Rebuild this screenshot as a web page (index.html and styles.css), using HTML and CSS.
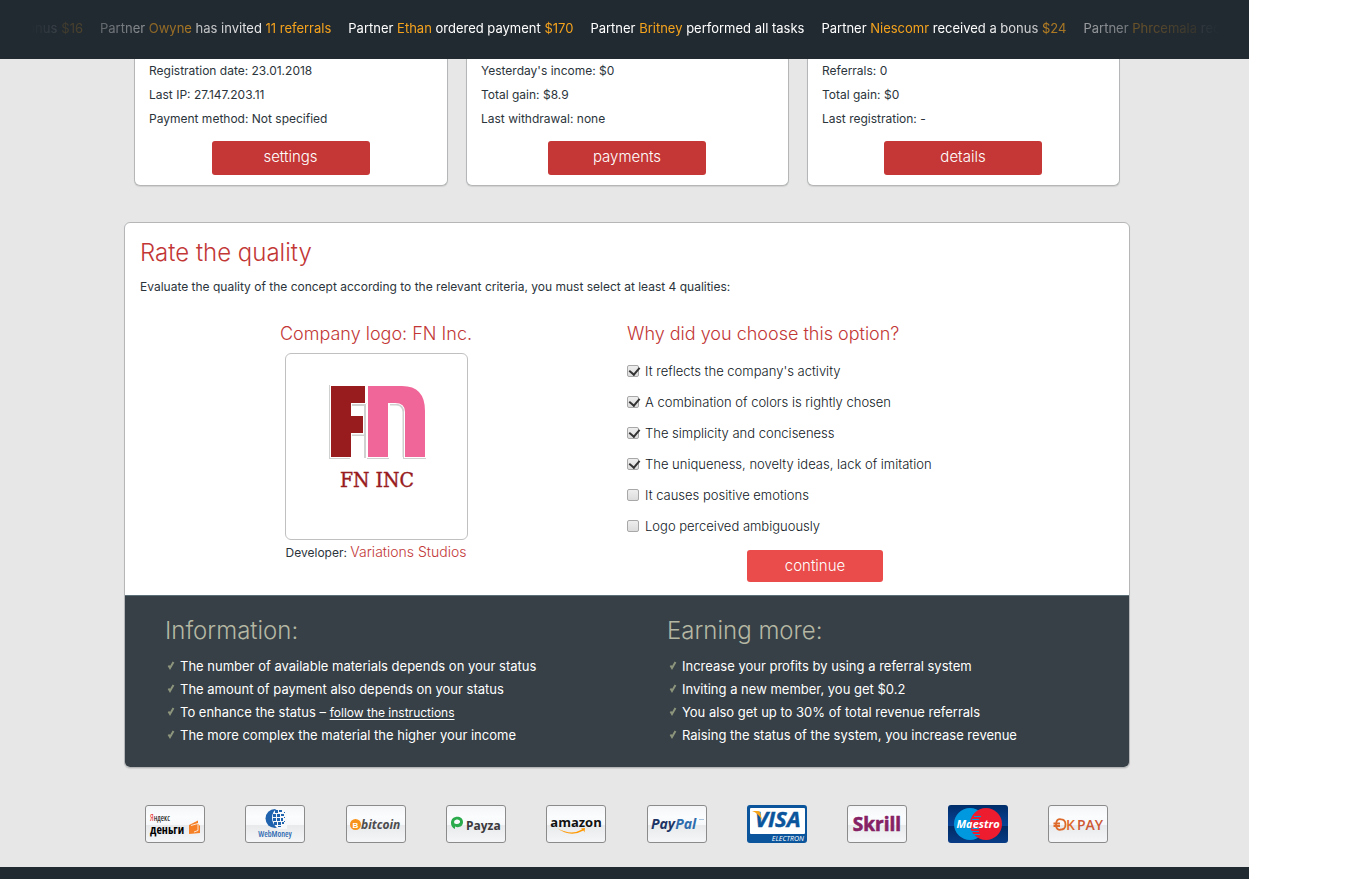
FILE: index.html
```html
<!DOCTYPE html>
<html lang="en">
<head>
<meta charset="utf-8">
<title>Partner account</title>
<link rel="stylesheet" href="styles.css">
</head>
<body>
<div class="page">
  <header class="topbar">
    <div class="ticker">
      <span class="news news-leaving">bonus <b>$16</b></span>
      <span class="news">Partner <b>Owyne</b> has invited <b>11 referrals</b></span>
      <span class="news">Partner <b>Ethan</b> ordered payment <b>$170</b></span>
      <span class="news">Partner <b>Britney</b> performed all tasks</span>
      <span class="news">Partner <b>Niescomr</b> received a bonus <b>$24</b></span>
      <span class="news">Partner <b>Phrcemala</b> received</span>
    </div>
  </header>

  <main class="content">
    <section class="cards">
      <article class="card">
        <p>Registration date: 23.01.2018</p>
        <p>Last IP: 27.147.203.11</p>
        <p>Payment method: Not specified</p>
        <button class="btn" type="button">settings</button>
      </article>
      <article class="card">
        <p>Yesterday's income: $0</p>
        <p>Total gain: $8.9</p>
        <p>Last withdrawal: none</p>
        <button class="btn" type="button">payments</button>
      </article>
      <article class="card">
        <p>Referrals: 0</p>
        <p>Total gain: $0</p>
        <p>Last registration: -</p>
        <button class="btn" type="button">details</button>
      </article>
    </section>

    <section class="panel">
      <div class="intro">
        <h1>Rate the quality</h1>
        <p>Evaluate the quality of the concept according to the relevant criteria, you must select at least 4 qualities:</p>
      </div>
      <div class="rating">
        <div class="concept">
          <h2>Company logo: FN Inc.</h2>
          <div class="logo-box">
            <svg class="logo" viewBox="0 0 100 108" role="img" aria-label="FN Inc">
              <g fill="#d0d0d0">
                <path d="M3 1H38V22H24V35H37V51H24V75H3Z"/>
                <path d="M26 20H41V75H63V20H72Q77 21 77 28V75H100V27L60 19Z"/>
              </g>
              <g fill="#fff">
                <path d="M4 1H40V21H26V31H38V50H26V74H4Z"/>
                <path d="M26 21H40V74H26V50H38V31H26Z"/>
                <path d="M41 1H74Q100 1 100 26V74H78V28Q78 21 68 21H63V74H41Z"/>
              </g>
              <path fill="#d0d0d0" d="M26 20H40V74H38V22H26ZM26 50.500H38V52H26Z"/>
              <path fill="#d0d0d0" d="M64 20H72Q78 21 78 28V73H76.500V28Q76 22 71 21.500H64Z"/>
              <path fill="#981b1e" d="M5 2H39V19H25V32H37V49H25V73H5Z"/>
              <path fill="#f06698" d="M42 2H76Q99 2 99 27V73H79V28Q79 19 69 19H62V73H42Z"/>
              <text x="51" y="103" class="logo-name">FN INC</text>
            </svg>
          </div>
          <p class="developer">Developer: <a href="#">Variations Studios</a></p>
        </div>
        <form class="reasons">
          <h2>Why did you choose this option?</h2>
          <label><input type="checkbox" checked>It reflects the company's activity</label>
          <label><input type="checkbox" checked>A combination of colors is rightly chosen</label>
          <label><input type="checkbox" checked>The simplicity and conciseness</label>
          <label><input type="checkbox" checked>The uniqueness, novelty ideas, lack of imitation</label>
          <label><input type="checkbox">It causes positive emotions</label>
          <label><input type="checkbox">Logo perceived ambiguously</label>
          <button class="btn btn-bright" type="button">continue</button>
        </form>
      </div>
      <div class="tips">
        <div class="tip">
          <h1>Information:</h1>
          <ul>
            <li><svg class="tick" viewBox="0 0 8 9"><path d="M1.500 4.500L3 7L6.500 1"/></svg>The number of available materials depends on your status</li>
            <li><svg class="tick" viewBox="0 0 8 9"><path d="M1.500 4.500L3 7L6.500 1"/></svg>The amount of payment also depends on your status</li>
            <li><svg class="tick" viewBox="0 0 8 9"><path d="M1.500 4.500L3 7L6.500 1"/></svg><span>To enhance the status – <a href="#">follow the instructions</a></span></li>
            <li><svg class="tick" viewBox="0 0 8 9"><path d="M1.500 4.500L3 7L6.500 1"/></svg>The more complex the material the higher your income</li>
          </ul>
        </div>
        <div class="tip">
          <h1>Earning more:</h1>
          <ul>
            <li><svg class="tick" viewBox="0 0 8 9"><path d="M1.500 4.500L3 7L6.500 1"/></svg>Increase your profits by using a referral system</li>
            <li><svg class="tick" viewBox="0 0 8 9"><path d="M1.500 4.500L3 7L6.500 1"/></svg>Inviting a new member, you get $0.2</li>
            <li><svg class="tick" viewBox="0 0 8 9"><path d="M1.500 4.500L3 7L6.500 1"/></svg>You also get up to 30% of total revenue referrals</li>
            <li><svg class="tick" viewBox="0 0 8 9"><path d="M1.500 4.500L3 7L6.500 1"/></svg>Raising the status of the system, you increase revenue</li>
          </ul>
        </div>
      </div>
    </section>

    <section class="systems">
      <svg class="pay" viewBox="0 0 60 38">
        <defs>
          <linearGradient id="plate" x2="0" y2="1">
            <stop offset="0" stop-color="#f4f5f6"/><stop offset=".3" stop-color="#fbfcfd"/><stop offset=".54" stop-color="#f7f8fa"/>
            <stop offset=".54" stop-color="#e8eaec"/><stop offset="1" stop-color="#f5f6f7"/>
          </linearGradient>
          <linearGradient id="navy" x2="0" y2="1">
            <stop offset="0" stop-color="#002d6a"/><stop offset=".54" stop-color="#084295"/><stop offset=".54" stop-color="#002a63"/><stop offset="1" stop-color="#083c86"/>
          </linearGradient>
        </defs>
        <rect class="plate" x=".5" y=".5" width="59" height="37" rx="2.5"/>
        <text x="5" y="16" class="cond" font-size="8"><tspan fill="#e8262b">Я</tspan>ндекс</text>
        <text x="5" y="29" class="cond" font-size="12" font-weight="700">деньги</text>
        <path fill="#f58025" d="M44 20L53 15.500V18.500L55 21V28L44 29Z"/>
        <path fill="none" stroke="#fff" stroke-width=".8" d="M46 20.500L53 18.500V25.500L49 27"/>
      </svg>
      <svg class="pay" viewBox="0 0 60 38">
        <rect class="plate" x=".5" y=".5" width="59" height="37" rx="2.5"/>
        <circle cx="30" cy="13.500" r="9.500" fill="#1f62ae"/>
        <path fill="#f6f8fa" d="M33 3H42V24H34Q27 20 27 13Q27 6 33 3Z"/>
        <g fill="#1f62ae">
          <path d="M30 5h3v3h-3zM34 5h3v2h-3zM28 9h3v3h-3zM32 9h3v3h-3zM36 9h3v2h-3zM28 13h3v3h-3zM32 13h3v3h-3zM36 13h2v3h-2zM29 17h3v3h-3zM33 17h3v3h-3zM37 17h2v2h-2zM33 21h3v1h-3zM39 7h1v1h-1zM39 12h1v1h-1zM39 16h1v1h-1z"/>
        </g>
        <text x="30" y="32" text-anchor="middle" class="cond" font-size="8" font-weight="600" fill="#2a67b0">WebMoney</text>
      </svg>
      <svg class="pay" viewBox="0 0 60 38">
        <rect class="plate" x=".5" y=".5" width="59" height="37" rx="2.5"/>
        <circle cx="9.500" cy="19.500" r="5.500" fill="#f7931a"/>
        <text x="9.500" y="22.500" text-anchor="middle" class="sans" font-size="8" font-weight="700" fill="#fff">B</text>
        <text x="15" y="24" class="open" font-size="12" font-weight="700" font-style="italic" fill="#4d4d4f">bitcoin</text>
      </svg>
      <svg class="pay" viewBox="0 0 60 38">
        <rect class="plate" x=".5" y=".5" width="59" height="37" rx="2.5"/>
        <path fill="#2bab4b" fill-rule="evenodd" d="M5 18C5 10 17 10 17 17C17 22 12 23 9 21.500L9 24Q5 22 5 18ZM8 17Q8 19.500 11 19Q14.500 18.500 14 16Q13 14 10.500 14.500Q8 15 8 17Z"/>
        <text x="20" y="25" class="open" font-size="12" font-weight="700" fill="#3c3a3c">Payza</text>
      </svg>
      <svg class="pay" viewBox="0 0 60 38">
        <rect class="plate" x=".5" y=".5" width="59" height="37" rx="2.5"/>
        <text x="30" y="22" text-anchor="middle" class="open" font-size="13" font-weight="700" fill="#111">amazon</text>
        <path fill="#f90" d="M11 23Q25 31 36 24.500L35 23.500L39 23L38.500 27.500L37.500 25.500Q24 33 11 23Z"/>
      </svg>
      <svg class="pay" viewBox="0 0 60 38">
        <rect class="plate" x=".5" y=".5" width="59" height="37" rx="2.5"/>
        <text x="4" y="24" class="open" font-size="14" font-weight="700" font-style="italic" fill="#1e3566">Pay<tspan fill="#2f6dad">Pal</tspan></text>
        <path stroke="#a9c3dd" d="M52 14.500h5"/>
      </svg>
      <svg class="pay" viewBox="0 0 60 38">
        <rect width="60" height="38" rx="3" fill="#0b559c"/>
        <rect x="3" y="3" width="55" height="26" rx="1" fill="#fff"/>
        <text x="8" y="22" class="open" font-size="22" font-weight="700" font-style="italic" fill="#0b559c" stroke="#0b559c" stroke-width=".5">VISA</text>
        <path fill="#f9a51a" d="M5 6H11Q13 6 13.500 9L15 15Q11 8 5 6Z"/>
        <text x="57" y="36" text-anchor="end" class="open" font-size="7" font-style="italic" fill="#fff">ELECTRON</text>
      </svg>
      <svg class="pay" viewBox="0 0 60 38">
        <rect class="plate" x=".5" y=".5" width="59" height="37" rx="2.5"/>
        <text x="30" y="26" text-anchor="middle" class="open" font-size="19" font-weight="700" fill="#862165" stroke="#862165" stroke-width=".6">Skrill</text>
      </svg>
      <svg class="pay" viewBox="0 0 60 38">
        <rect width="60" height="38" rx="3" fill="url(#navy)"/>
        <circle cx="22" cy="19" r="16" fill="#0099df"/>
        <circle cx="38" cy="19" r="16" fill="#ed1c2e"/>
        <path stroke="#0099df" d="M26 11.500h7M24 14.500h7M24 23.500h7M24 26.500h7M26 29.500h6"/>
        <text x="30" y="23" text-anchor="middle" class="open" font-size="11" font-weight="700" font-style="italic" fill="#fff">Maestro</text>
      </svg>
      <svg class="pay" viewBox="0 0 60 38">
        <rect class="plate" x=".5" y=".5" width="59" height="37" rx="2.5"/>
        <path fill="none" stroke="#dd6a2b" stroke-width="1.800" d="M14 14.500Q8 13 8 19.500T14 24.500M5.500 18.500H12M5.500 21H12M12 14.500Q17.500 14 17.500 19.500T12 24.500"/>
        <text x="18" y="25" class="open" font-size="14" font-weight="600" fill="#dd6a2b">K</text>
        <text x="29" y="25" class="open" font-size="14" font-weight="600" fill="#cd5a35">PAY</text>
      </svg>
    </section>
  </main>
  <footer class="footer"></footer>
</div>
</body>
</html>
```

FILE: styles.css
```css
* { box-sizing: border-box; }
body {
  margin: 0;
  padding: 0 117px 15px 0;
  background: #fff;
  color: #2b343b;
  font: 400 12px/24px Inter, "Liberation Sans", sans-serif;
}
h1, h2, p, ul { margin: 0; padding: 0; }
h1 { font-size: 24px; line-height: 32px; font-weight: 300; color: #c23736; }
h2 { font-size: 18px; line-height: 24px; font-weight: 300; color: #c23736; }
.page { background: #e7e7e7; }

.topbar { padding: 16px 30px 19px; background: #222a31; }
.ticker {
  display: flex;
  gap: 17px;
  overflow: hidden;
  color: #fff;
  font-size: 13px;
  -webkit-mask-image: linear-gradient(90deg, transparent, #000 250px, #000 calc(100% - 250px), transparent);
  mask-image: linear-gradient(90deg, transparent, #000 250px, #000 calc(100% - 250px), transparent);
}
.news { flex: none; white-space: nowrap; }
.news b { font-weight: 400; color: #f5a31d; }
.news-leaving { display: flex; justify-content: flex-end; gap: 4px; width: 53px; }

.content { padding: 0 119px 24px 124px; }
.cards {
  display: grid;
  grid-template-columns: 314fr 323fr 313fr;
  gap: 18px;
  padding: 0 10px;
}
.card {
  display: flex;
  flex-direction: column;
  padding: 0 15px 10px 14px;
  background: #fff;
  border: 1px solid #b4b6b7;
  border-top: 0;
  border-radius: 0 0 6px 6px;
  box-shadow: 0 1px 1px #d0d0d0;
}
.btn {
  align-self: center;
  width: 158px;
  height: 34px;
  margin-top: 10px;
  padding: 0 0 2px;
  border: 0;
  border-radius: 3px;
  background: #c43736;
  color: #fff;
  font: 300 15px/20px Inter, "Liberation Sans", sans-serif;
}

.panel {
  margin-top: 36px;
  background: #fff;
  border: 1px solid #b4b6b7;
  border-radius: 6px;
  box-shadow: 0 1px 1px #d0d0d0;
  overflow: hidden;
}
.intro { padding: 14px 15px 0; }
.intro p { margin-top: 6px; }
.rating { display: grid; grid-template-columns: 1fr 1fr; padding: 23px 0 13px; }
.concept { display: flex; flex-direction: column; align-items: center; }
.logo-box {
  display: flex;
  justify-content: center;
  width: 183px;
  height: 187px;
  margin-top: 7px;
  padding-top: 30px;
  border: 1px solid #c0c0c0;
  border-radius: 6px;
}
.logo { width: 100px; height: 108px; }
.logo-name {
  font-family: "DejaVu Serif Condensed", "DejaVu Serif", serif;
  font-size: 21px;
  font-stretch: condensed;
  fill: #981b1e;
  stroke: #981b1e;
  stroke-width: .4px;
  text-anchor: middle;
}
.developer a { color: #c23736; font-size: 14px; font-weight: 300; text-decoration: none; }
.reasons { display: flex; flex-direction: column; align-items: flex-start; }
.reasons h2 { margin-bottom: 10px; }
.reasons label {
  display: flex;
  align-items: center;
  gap: 6px;
  color: #10181e;
  font-size: 13px;
  line-height: 31px;
  font-weight: 300;
}
.reasons input {
  appearance: none;
  width: 12px;
  height: 12px;
  margin: 0 0 1px;
  border: 1px solid #a8a8a8;
  border-radius: 2px;
  background: linear-gradient(#eee, #dcdcdc);
}
.reasons input:checked::after {
  content: "";
  display: block;
  width: 5px;
  height: 8px;
  margin: 0 0 0 3px;
  border: solid #333;
  border-width: 0 2px 2px 0;
  transform: translateY(-1px) rotate(40deg);
}
.btn-bright {
  align-self: flex-start;
  width: 136px;
  height: 32px;
  margin: 8px 0 0 120px;
  padding: 0;
  background: #e94c4b;
}

.tips {
  display: grid;
  grid-template-columns: 1fr 1fr;
  padding: 19px 0 20px;
  background: #364046;
  border-top: 1px solid #5c6f78;
  color: #fff;
}
.tip { padding-left: 40px; }
.tip h1 { margin-bottom: 8px; color: #b5b7a3; }
.tip ul { list-style: none; }
.tip li { display: flex; align-items: center; padding-left: 2px; font-size: 13px; line-height: 23px; }
.tip a { color: #fff; font-size: 12px; text-underline-offset: 2px; }
.tick { width: 8px; height: 9px; margin: 0 5px 2px 0; fill: none; stroke: #8d947c; stroke-width: 2; }

.systems { display: flex; justify-content: space-between; padding: 37px 22px 0 21px; }
.pay { width: 60px; height: 38px; }
.plate { fill: url(#plate); stroke: #8b8b8b; }
.cond { font-family: "Open Sans", sans-serif; font-stretch: condensed; }
.open { font-family: "Open Sans", sans-serif; }
.sans { font-family: "Liberation Sans", sans-serif; }
.footer { height: 12px; background: #222a31; }
```
